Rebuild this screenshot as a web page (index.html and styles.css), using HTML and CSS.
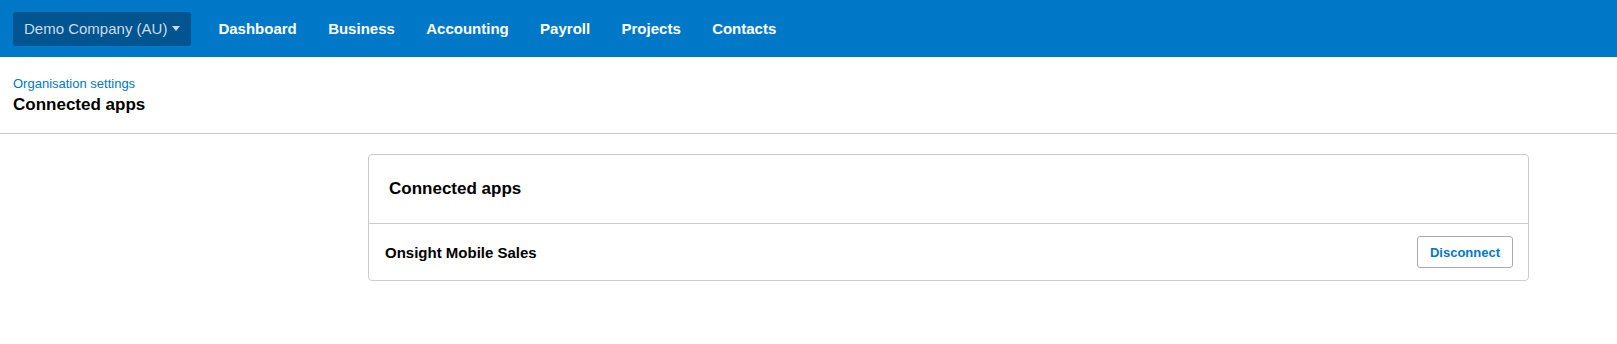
FILE: index.html
```html
<!DOCTYPE html>
<html lang="en">
<head>
    <meta charset="UTF-8">
    <meta name="viewport" content="width=device-width, initial-scale=1.0">
    <title>Connected apps</title>
    <link rel="stylesheet" href="styles.css">
</head>
<body>
    <header class="topbar">
        <button class="org-switch">Demo Company (AU) <span class="caret"></span></button>
        <nav class="main-nav">
            <a href="#">Dashboard</a>
            <a href="#">Business</a>
            <a href="#">Accounting</a>
            <a href="#">Payroll</a>
            <a href="#">Projects</a>
            <a href="#">Contacts</a>
        </nav>
    </header>

    <div class="page-head">
        <a class="crumb" href="#">Organisation settings</a>
        <h1>Connected apps</h1>
    </div>

    <div class="content">
        <div class="card">
            <div class="card-head">
                <h2>Connected apps</h2>
            </div>
            <div class="app-row">
                <span class="app-name">Onsight Mobile Sales</span>
                <button class="btn">Disconnect</button>
            </div>
        </div>
    </div>
</body>
</html>
```

FILE: styles.css
```css
body {
    font-family: Arial, "Liberation Sans", sans-serif;
    margin: 0;
    color: #000;
    background: #fff;
}
.topbar {
    display: flex;
    align-items: center;
    height: 57px;
    padding-left: 13px;
    background: #0078c8;
}
.org-switch {
    display: flex;
    align-items: center;
    height: 34px;
    padding: 0 11px;
    border: 0;
    border-radius: 3px;
    background: #00548f;
    color: #c9dced;
    font-family: inherit;
    font-size: 15px;
}
.caret {
    width: 0;
    height: 0;
    margin-left: 5px;
    border-left: 4px solid transparent;
    border-right: 4px solid transparent;
    border-top: 5px solid #c9dced;
}
.main-nav {
    display: flex;
    gap: 31.4px;
    margin-left: 27px;
}
.main-nav a {
    color: #fff;
    font-size: 15px;
    font-weight: bold;
    text-decoration: none;
}
.page-head {
    padding: 19px 13px 18px;
    border-bottom: 1px solid #ccc;
}
.crumb {
    display: block;
    font-size: 13px;
    line-height: 16px;
    color: #0078c8;
    text-decoration: none;
}
h1 {
    margin: 3px 0 0;
    font-size: 17px;
    line-height: 20px;
}
.content {
    padding: 20px 88px 0 368px;
}
.card {
    border: 1px solid #ccc;
    border-radius: 4px;
}
.card-head {
    padding: 24px 20px;
    border-bottom: 1px solid #ccc;
}
.card-head h2 {
    margin: 0;
    font-size: 17px;
    line-height: 20px;
}
.app-row {
    display: flex;
    align-items: center;
    justify-content: space-between;
    padding: 12px 15px 12px 16px;
}
.app-name {
    font-size: 15px;
    font-weight: bold;
}
.btn {
    height: 32px;
    padding: 0 12px;
    border: 1px solid #a8abb2;
    border-radius: 3px;
    background: #fff;
    color: #0078c8;
    font-family: inherit;
    font-size: 13px;
    font-weight: bold;
}
```
